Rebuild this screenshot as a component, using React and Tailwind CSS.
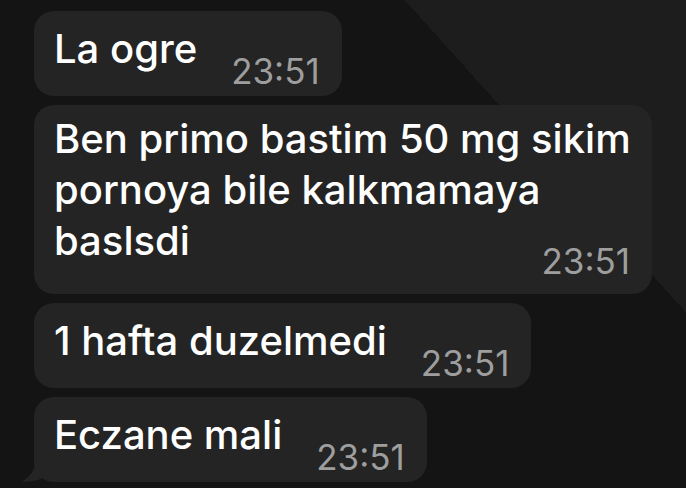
import React from "react";

const messages = [
  { id: 1, text: "La ogre", time: "23:51" },
  { id: 2, lines: "Ben primo bastim 50 mg sikim pornoya bile kalkmamaya", last: "baslsdi", time: "23:51", wide: true },
  { id: 3, text: "1 hafta duzelmedi", time: "23:51" },
  { id: 4, text: "Eczane mali", time: "23:51", tail: true },
];

function Tail() {
  return (
    <svg className="absolute left-[-13px] bottom-0" width="30" height="34" viewBox="0 0 30 34">
      <path d="M30 0 L17 0 C17 16 12 27 1 34 C12 34 22 31 30 26 Z" fill="#242424" />
    </svg>
  );
}

function Bubble({ msg }) {
  if (msg.wide) {
    return (
      <div className="relative flex h-[189px] w-[618px] flex-col rounded-[20px] bg-[#242424] pl-5 pr-[12px] pt-[8px]">
        <p className="text-[40px] font-medium leading-[51px] text-white">{msg.lines}</p>
        <div className="flex items-start justify-between pr-[10px]">
          <span className="text-[40px] font-medium leading-[51px] text-white">{msg.last}</span>
          <span className="mt-[27px] text-[35px] leading-[38px] text-[#9e9e9e]">{msg.time}</span>
        </div>
      </div>
    );
  }
  return (
    <div className="relative flex h-[85px] items-start rounded-[20px] bg-[#242424] pl-5 pr-[22px]">
      {msg.tail && <Tail />}
      <span className="mt-[12px] text-[40px] font-medium leading-[51px] text-white">{msg.text}</span>
      <span className="ml-[34px] mt-[41px] text-[35px] leading-[38px] text-[#9e9e9e]">{msg.time}</span>
    </div>
  );
}

export default function App() {
  return (
    <div
      className="h-[488px] w-[686px] overflow-hidden bg-[linear-gradient(48deg,#141414_75%,#1d1d1d_75%)] pt-[11px] pl-[34px]"
      style={{ fontFamily: "Inter, 'Liberation Sans', sans-serif" }}
    >
      <div className="flex flex-col items-start gap-[9px]">
        {messages.map((m) => (
          <Bubble key={m.id} msg={m} />
        ))}
      </div>
    </div>
  );
}
